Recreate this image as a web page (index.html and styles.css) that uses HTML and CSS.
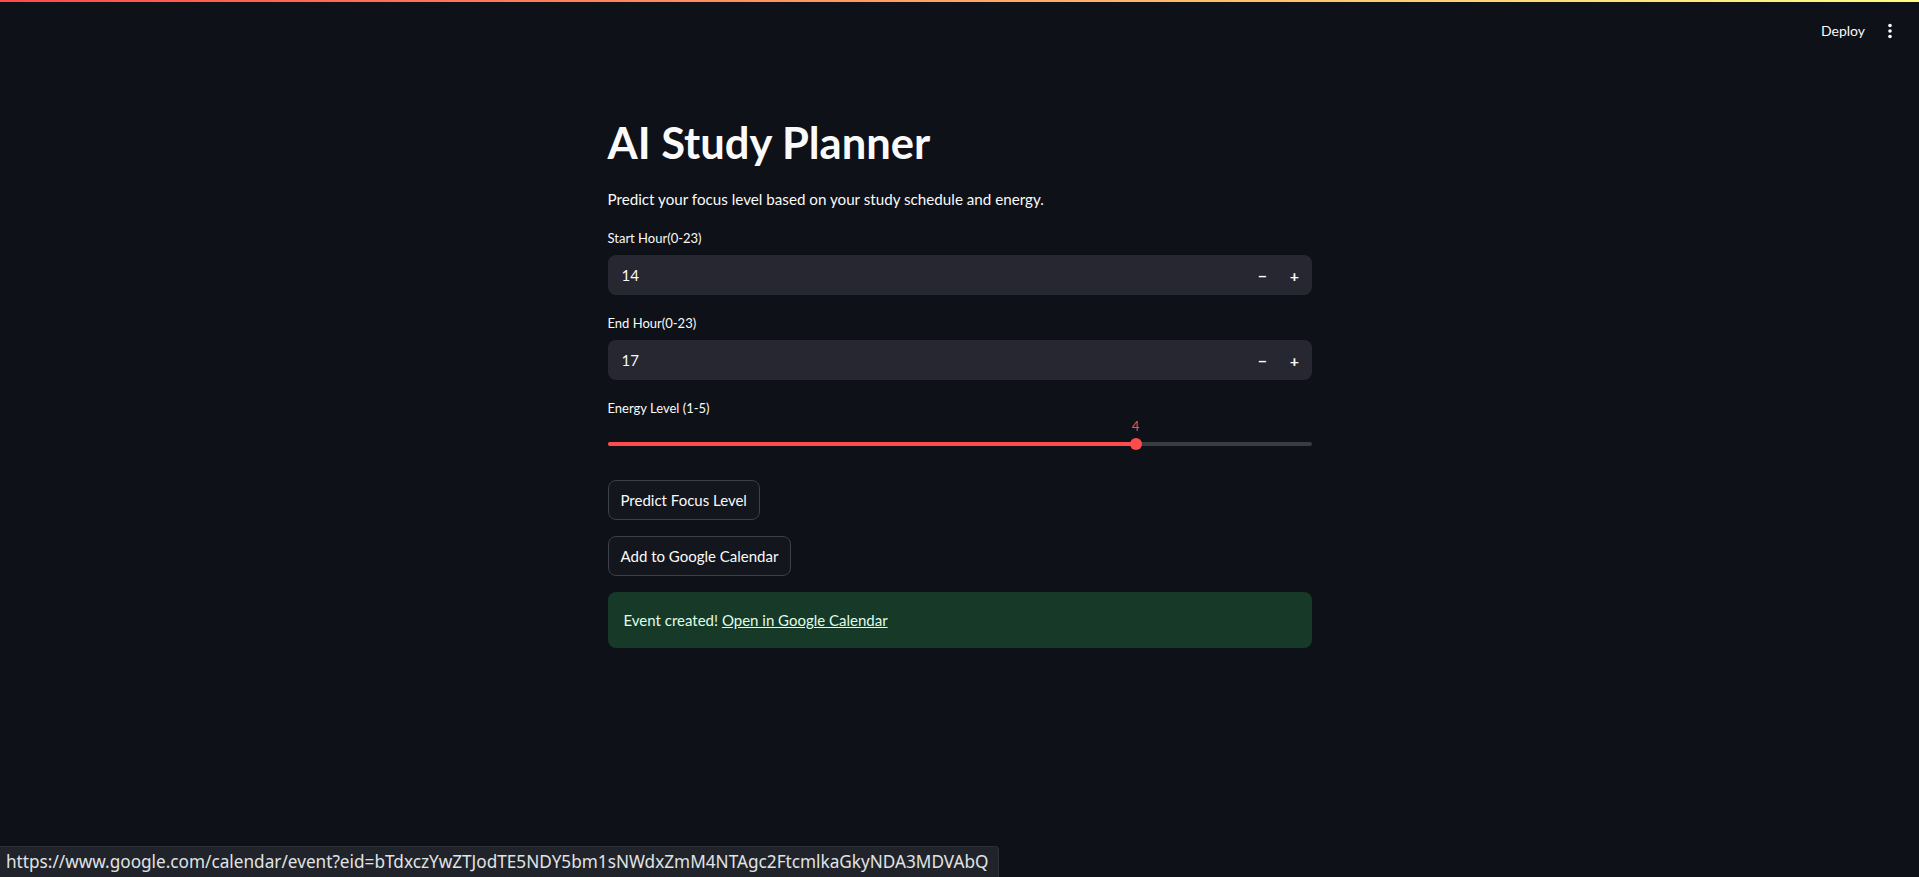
FILE: index.html
```html
<!DOCTYPE html>
<html lang="en">
<head>
<meta charset="utf-8">
<title>AI Study Planner</title>
<link rel="stylesheet" href="styles.css">
</head>
<body>
<header class="header">
  <div class="decoration"></div>
  <div class="toolbar">
    <span class="deploy">Deploy</span>
    <span class="menu-btn">
      <svg width="4" height="16" viewBox="0 0 4 16"><circle cx="2" cy="2.5" r="1.8" fill="#fafafa"/><circle cx="2" cy="8" r="1.8" fill="#fafafa"/><circle cx="2" cy="13.5" r="1.8" fill="#fafafa"/></svg>
    </span>
  </div>
</header>
<main class="main">
  <h1 class="title">AI Study Planner</h1>
  <p class="subtitle">Predict your focus level based on your study schedule and energy.</p>

  <label class="label label-first">Start Hour(0-23)</label>
  <div class="number-input">
    <span class="num-value">14</span>
    <span class="steps"><span class="step">&#8722;</span><span class="step">+</span></span>
  </div>

  <label class="label">End Hour(0-23)</label>
  <div class="number-input">
    <span class="num-value">17</span>
    <span class="steps"><span class="step">&#8722;</span><span class="step">+</span></span>
  </div>

  <label class="label">Energy Level (1-5)</label>
  <div class="slider">
    <div class="track">
      <div class="fill" style="width:75%"></div>
      <div class="thumb" style="left:75%">
        <span class="thumb-value">4</span>
      </div>
    </div>
  </div>

  <button class="btn btn-first">Predict Focus Level</button>
  <button class="btn">Add to Google Calendar</button>

  <div class="alert">Event created! <a class="alert-link" href="#">Open in Google Calendar</a></div>
</main>
<div class="status-bubble">https://www.google.com/calendar/event?eid=bTdxczYwZTJodTE5NDY5bm1sNWdxZmM4NTAgc2FtcmlkaGkyNDA3MDVAbQ</div>
</body>
</html>
```
FILE: styles.css
```css
* { box-sizing: border-box; }
html, body {
  margin: 0;
  padding: 0;
  background: #0e1117;
  color: #fafafa;
  font-family: Lato, "Noto Sans", sans-serif;
  height: 100%;
  overflow: hidden;
}
.header {
  height: 60px;
  display: flex;
  flex-direction: column;
}
.decoration {
  height: 2px;
  background: linear-gradient(90deg, #ff4b4b, #ffff80);
}
.toolbar {
  flex: 1;
  display: flex;
  justify-content: flex-end;
  align-items: center;
  padding-right: 27px;
  gap: 23px;
}
.deploy {
  font-size: 14px;
  color: #fafafa;
  line-height: 20px;
}
.menu-btn {
  display: flex;
  align-items: center;
}
.main {
  width: 704px;
  margin: 0 auto;
  display: flex;
  flex-direction: column;
  align-items: flex-start;
}
.title {
  margin: 56px 0 0;
  font-size: 43.5px;
  line-height: 52px;
  font-weight: 700;
}
.subtitle {
  margin: 19px 0 0;
  font-size: 15.2px;
  line-height: 24px;
}
.label {
  font-size: 13px;
  line-height: 20px;
  margin-top: 18px;
}
.label-first { margin-top: 17px; }
.number-input {
  margin-top: 7px;
  width: 100%;
  height: 40px;
  background: #262730;
  border-radius: 8px;
  display: flex;
  align-items: center;
  justify-content: space-between;
  padding-left: 14px;
  padding-right: 1px;
}
.num-value {
  font-size: 15px;
  color: #fafafa;
}
.steps {
  display: flex;
  align-items: center;
}
.step {
  width: 32px;
  text-align: center;
  font-size: 16px;
  font-weight: 700;
}
.slider {
  width: 100%;
  height: 46px;
  padding-top: 24px;
}
.track {
  position: relative;
  height: 4px;
  border-radius: 2px;
  background: #3a3c43;
}
.fill {
  height: 100%;
  background: #ff4b4b;
  border-radius: 2px;
}
.thumb {
  position: absolute;
  top: 50%;
  width: 12px;
  height: 12px;
  margin-left: -6px;
  margin-top: -6px;
  border-radius: 50%;
  background: #ff4b4b;
}
.thumb-value {
  position: absolute;
  left: 50%;
  transform: translateX(-50%);
  bottom: 16px;
  font-size: 13px;
  line-height: 16px;
  color: #ff4b4b;
}
.btn {
  margin-top: 16px;
  height: 40px;
  padding: 0 12px;
  background: #13161d;
  border: 1px solid #3d4048;
  border-radius: 8px;
  color: #fafafa;
  font-family: inherit;
  font-size: 15px;
}
.btn-first { margin-top: 16px; }
.alert {
  margin-top: 16px;
  width: 100%;
  height: 56px;
  background: #173928;
  border-radius: 8px;
  padding: 0 16px;
  display: flex;
  align-items: center;
  white-space: pre;
  font-size: 15px;
  color: #dffde9;
}
.alert-link {
  color: #dffde9;
  text-decoration: underline;
}
.status-bubble {
  position: fixed;
  left: 0;
  bottom: 0;
  width: 999px;
  height: 31px;
  background: #202329;
  border-top: 1px solid #2c3036;
  border-right: 1px solid #2c3036;
  border-top-right-radius: 4px;
  color: #e1e3e6;
  font-family: "Noto Sans", sans-serif;
  font-size: 17.2px;
  line-height: 30px;
  padding-left: 6px;
  white-space: nowrap;
  overflow: hidden;
}
```
